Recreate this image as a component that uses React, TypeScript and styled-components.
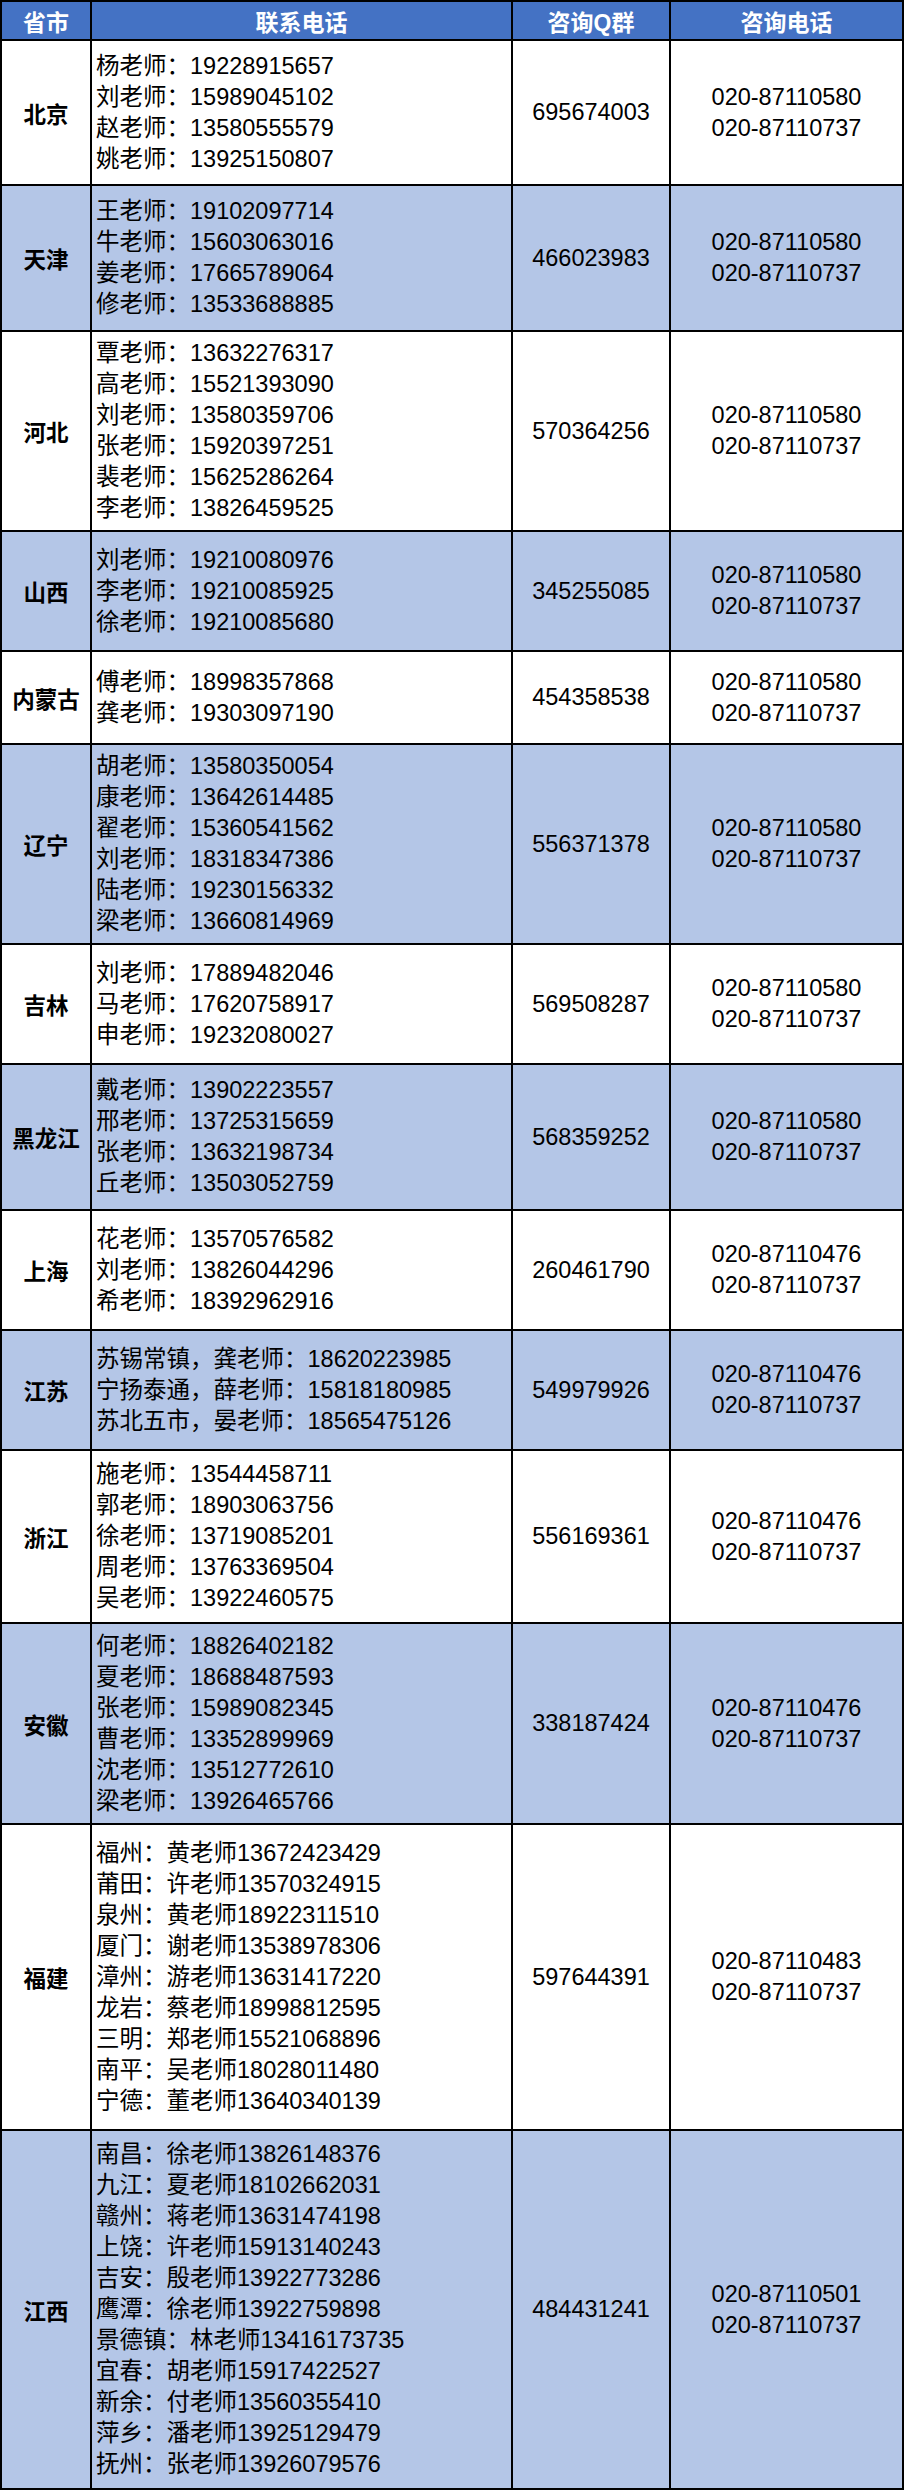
import * as React from 'react';
import styled, { createGlobalStyle } from 'styled-components';

const Colors = {
    HEADER: '#4472c4',
    SHADE: '#b4c6e7',
    PLAIN: '#ffffff',
    LINE: '#000000',
};

type Region = {
    name: string;
    height: number;
    contacts: string[];
    qq: string;
    phones: string[];
};

const P580 = ['020-87110580', '020-87110737'];
const P476 = ['020-87110476', '020-87110737'];

const regions: Region[] = [
    {
        name: '北京',
        height: 145,
        contacts: ['杨老师：19228915657', '刘老师：15989045102', '赵老师：13580555579', '姚老师：13925150807'],
        qq: '695674003',
        phones: P580,
    },
    {
        name: '天津',
        height: 146,
        contacts: ['王老师：19102097714', '牛老师：15603063016', '姜老师：17665789064', '修老师：13533688885'],
        qq: '466023983',
        phones: P580,
    },
    {
        name: '河北',
        height: 200,
        contacts: [
            '覃老师：13632276317',
            '高老师：15521393090',
            '刘老师：13580359706',
            '张老师：15920397251',
            '裴老师：15625286264',
            '李老师：13826459525',
        ],
        qq: '570364256',
        phones: P580,
    },
    {
        name: '山西',
        height: 120,
        contacts: ['刘老师：19210080976', '李老师：19210085925', '徐老师：19210085680'],
        qq: '345255085',
        phones: P580,
    },
    {
        name: '内蒙古',
        height: 93,
        contacts: ['傅老师：18998357868', '龚老师：19303097190'],
        qq: '454358538',
        phones: P580,
    },
    {
        name: '辽宁',
        height: 200,
        contacts: [
            '胡老师：13580350054',
            '康老师：13642614485',
            '翟老师：15360541562',
            '刘老师：18318347386',
            '陆老师：19230156332',
            '梁老师：13660814969',
        ],
        qq: '556371378',
        phones: P580,
    },
    {
        name: '吉林',
        height: 120,
        contacts: ['刘老师：17889482046', '马老师：17620758917', '申老师：19232080027'],
        qq: '569508287',
        phones: P580,
    },
    {
        name: '黑龙江',
        height: 146,
        contacts: ['戴老师：13902223557', '邢老师：13725315659', '张老师：13632198734', '丘老师：13503052759'],
        qq: '568359252',
        phones: P580,
    },
    {
        name: '上海',
        height: 120,
        contacts: ['花老师：13570576582', '刘老师：13826044296', '希老师：18392962916'],
        qq: '260461790',
        phones: P476,
    },
    {
        name: '江苏',
        height: 120,
        contacts: ['苏锡常镇，龚老师：18620223985', '宁扬泰通，薛老师：15818180985', '苏北五市，晏老师：18565475126'],
        qq: '549979926',
        phones: P476,
    },
    {
        name: '浙江',
        height: 173,
        contacts: [
            '施老师：13544458711',
            '郭老师：18903063756',
            '徐老师：13719085201',
            '周老师：13763369504',
            '吴老师：13922460575',
        ],
        qq: '556169361',
        phones: P476,
    },
    {
        name: '安徽',
        height: 201,
        contacts: [
            '何老师：18826402182',
            '夏老师：18688487593',
            '张老师：15989082345',
            '曹老师：13352899969',
            '沈老师：13512772610',
            '梁老师：13926465766',
        ],
        qq: '338187424',
        phones: P476,
    },
    {
        name: '福建',
        height: 306,
        contacts: [
            '福州：黄老师13672423429',
            '莆田：许老师13570324915',
            '泉州：黄老师18922311510',
            '厦门：谢老师13538978306',
            '漳州：游老师13631417220',
            '龙岩：蔡老师18998812595',
            '三明：郑老师15521068896',
            '南平：吴老师18028011480',
            '宁德：董老师13640340139',
        ],
        qq: '597644391',
        phones: ['020-87110483', '020-87110737'],
    },
    {
        name: '江西',
        height: 359,
        contacts: [
            '南昌：徐老师13826148376',
            '九江：夏老师18102662031',
            '赣州：蒋老师13631474198',
            '上饶：许老师15913140243',
            '吉安：殷老师13922773286',
            '鹰潭：徐老师13922759898',
            '景德镇：林老师13416173735',
            '宜春：胡老师15917422527',
            '新余：付老师13560355410',
            '萍乡：潘老师13925129479',
            '抚州：张老师13926079576',
        ],
        qq: '484431241',
        phones: ['020-87110501', '020-87110737'],
    },
];

const App: React.FC = () => {
    return (
        <>
            <GlobalStyle />
            <Sheet>
                <HeaderRow>
                    <HeaderCell>省市</HeaderCell>
                    <HeaderCell>联系电话</HeaderCell>
                    <HeaderCell>咨询Q群</HeaderCell>
                    <HeaderCell>咨询电话</HeaderCell>
                </HeaderRow>
                {regions.map((r, i) => (
                    <Row key={r.name} $height={r.height} $shaded={i % 2 === 1}>
                        <ProvinceCell>{r.name}</ProvinceCell>
                        <ContactCell>
                            {r.contacts.map((c) => (
                                <Line key={c}>{c}</Line>
                            ))}
                        </ContactCell>
                        <CenterCell>
                            <Line>{r.qq}</Line>
                        </CenterCell>
                        <CenterCell>
                            {r.phones.map((p) => (
                                <Line key={p}>{p}</Line>
                            ))}
                        </CenterCell>
                    </Row>
                ))}
            </Sheet>
        </>
    );
};

const GlobalStyle = createGlobalStyle`
    html, body {
        margin: 0;
        padding: 0;
        background: #ffffff;
    }
    body {
        font-family: "Liberation Sans", "Noto Sans CJK SC", sans-serif;
        color: #000;
    }
    * {
        box-sizing: border-box;
    }
`;

const Sheet = styled.div`
    width: 904px;
    border-top: 2px solid ${Colors.LINE};
    border-left: 2px solid ${Colors.LINE};
`;

const grid = `
    display: grid;
    grid-template-columns: 90px 421px 158px 233px;
`;

const HeaderRow = styled.div`
    ${grid};
    height: 39px;
    background-color: ${Colors.HEADER};
`;

const HeaderCell = styled.div`
    display: flex;
    align-items: center;
    justify-content: center;
    border-right: 2px solid ${Colors.LINE};
    border-bottom: 2px solid ${Colors.LINE};
    color: #ffffff;
    font-size: 23px;
    font-weight: 700;
`;

const Row = styled.div<{ $height: number; $shaded: boolean }>`
    ${grid};
    height: ${(p) => p.$height}px;
    background-color: ${(p) => (p.$shaded ? Colors.SHADE : Colors.PLAIN)};
`;

const Cell = styled.div`
    display: flex;
    flex-direction: column;
    justify-content: center;
    border-right: 2px solid ${Colors.LINE};
    border-bottom: 2px solid ${Colors.LINE};
    font-size: 23.5px;
`;

const ProvinceCell = styled(Cell)`
    align-items: center;
    font-size: 22.5px;
    font-weight: 700;
`;

const ContactCell = styled(Cell)`
    align-items: flex-start;
    padding-left: 4px;
`;

const CenterCell = styled(Cell)`
    align-items: center;
`;

const Line = styled.div`
    line-height: 31px;
    white-space: nowrap;
`;

export default App;
